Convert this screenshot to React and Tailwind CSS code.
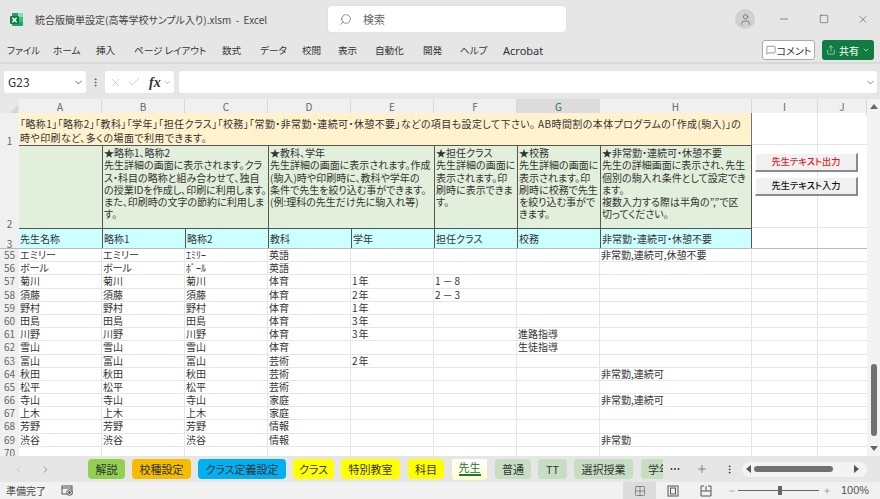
import React from "react";
import { Search, User, Minus, Square, X, ChevronDown, Check, MessageSquare, Share, ChevronLeft, ChevronRight, Plus, MoreVertical, MoreHorizontal, Grid2x2 } from "lucide-react";

const font = "[font-family:'Noto_Sans_CJK_JP','Noto_Sans',sans-serif] [font-feature-settings:'palt']";
const cols = "grid grid-cols-[19px_83px_83px_83px_83px_83px_83px_83px_152px_66px_49px]";

const menu = [
  ["ファイル", "w-[46px]"], ["ホーム", "w-[43px]"], ["挿入", "w-[38px]"], ["ページ レイアウト", "w-[88px]"],
  ["数式", "w-[38px]"], ["データ", "w-[42px]"], ["校閲", "w-[36px]"], ["表示", "w-[37px]"],
  ["自動化", "w-[48px]"], ["開発", "w-[37px]"], ["ヘルプ", "w-[43px]"],
];
const letters = ["A", "B", "C", "D", "E", "F", "G", "H", "I", "J"];

const rows = [
  [55, "エミリー", "エミリー", "ｴﾐﾘｰ", "英語", "", "", "", "非常勤,連続可,休憩不要"],
  [56, "ボール", "ボール", "ﾎﾞｰﾙ", "英語", "", "", "", ""],
  [57, "菊川", "菊川", "菊川", "体育", "1年", "1－8", "", ""],
  [58, "須藤", "須藤", "須藤", "体育", "2年", "2－3", "", ""],
  [59, "野村", "野村", "野村", "体育", "1年", "", "", ""],
  [60, "田島", "田島", "田島", "体育", "3年", "", "", ""],
  [61, "川野", "川野", "川野", "体育", "3年", "", "進路指導", ""],
  [62, "雪山", "雪山", "雪山", "体育", "", "", "生徒指導", ""],
  [63, "富山", "富山", "富山", "芸術", "2年", "", "", ""],
  [64, "秋田", "秋田", "秋田", "芸術", "", "", "", "非常勤,連続可"],
  [65, "松平", "松平", "松平", "芸術", "", "", "", ""],
  [66, "寺山", "寺山", "寺山", "家庭", "", "", "", "非常勤,連続可"],
  [67, "上木", "上木", "上木", "家庭", "", "", "", ""],
  [68, "芳野", "芳野", "芳野", "情報", "", "", "", ""],
  [69, "渋谷", "渋谷", "渋谷", "情報", "", "", "", "非常勤"],
  [70, "", "", "", "", "", "", "", ""],
];

const tabs = [
  ["解説", "bg-[#92d050] w-[37px]"],
  ["校種設定", "bg-[#f6bc00] w-[59px]"],
  ["クラス定義設定", "bg-[#00b0f0] w-[88px]"],
  ["クラス", "bg-[#ffff00] w-[41px]"],
  ["特別教室", "bg-[#ffff00] w-[59px]"],
  ["科目", "bg-[#ffff00] w-[36px] ml-[1px]"],
];
const tabs2 = [
  ["普通", "w-[36px] ml-[1px] justify-center"],
  ["TT", "w-[29px] justify-center"],
  ["選択授業", "w-[59px] justify-center"],
  ["学年", "w-[40px] ml-[1px] justify-start pl-[7px]"],
];

function Lines({ items }) {
  return items.map((t, i) => <div key={i} className="whitespace-nowrap">{t}</div>);
}

function Note({ span, items }) {
  return (
    <div className={`${span} bg-[#e2efda] border-l border-l-[#555] border-t border-t-[#555] pl-[1px] pt-[1px] text-[10px] leading-[12.3px] text-[#333]`}>
      <Lines items={items} />
    </div>
  );
}

function ExcelLogo() {
  return (
    <svg width="15" height="15" viewBox="0 0 15 15">
      <rect x="3" y="1" width="11" height="13" rx="1" fill="#21a366" />
      <rect x="9" y="1" width="5" height="4" fill="#8fdcb2" />
      <rect x="9" y="5" width="5" height="5" fill="#33c481" />
      <rect x="1" y="4" width="9" height="8" rx="1" fill="#107c41" />
      <path d="M3.4 5.7 L7.6 10.3 M7.6 5.7 L3.4 10.3" stroke="#fff" strokeWidth="1.3" />
    </svg>
  );
}

function Btn({ red, children }) {
  return (
    <div className={`w-[103px] h-[19px] bg-[#f0f0f0] border-r-2 border-b-2 border-r-[#8a8a8a] border-b-[#8a8a8a] border-t border-l border-t-white border-l-white flex items-center justify-center text-[9.2px] font-medium ${red ? "text-[#e01b24]" : "text-[#111]"}`}>
      {children}
    </div>
  );
}

export default function App() {
  return (
    <div className={`${font} w-[880px] h-[499px] overflow-hidden bg-[#e6e6e6] flex flex-col text-[#333]`}>
      {/* title bar */}
      <div className="h-[38px] flex items-center shrink-0">
        <div className="w-[35px] pl-[9px] flex items-center"><ExcelLogo /></div>
        <div className="w-[293px] text-[10px] text-[#444] whitespace-pre">統合版簡単設定(高等学校サンプル入り).xlsm  -  Excel</div>
        <div className="w-[238px] h-[26px] bg-white rounded-[3px] shadow-[0_0_1px_#bbb] flex items-center pl-[11px] gap-[11px] text-[11px] text-[#666]">
          <Search size={13} className="-scale-x-100" strokeWidth={1.3} />
          <span>検索</span>
        </div>
        <div className="ml-[169px] w-[20px] h-[20px] rounded-full bg-[#d0d0d0] flex items-center justify-center"><User size={13} strokeWidth={1.2} className="text-[#555]" /></div>
        <div className="ml-[23px] w-[12px] flex justify-center"><Minus size={12} strokeWidth={1} className="text-[#222]" /></div>
        <div className="ml-[28px] w-[12px] flex justify-center"><Square size={10} strokeWidth={1.1} className="text-[#222]" /></div>
        <div className="ml-[27px] w-[12px] flex justify-center"><X size={13} strokeWidth={1} className="text-[#222]" /></div>
      </div>
      {/* ribbon tabs */}
      <div className="h-[26px] shrink-0 flex items-center pl-[7px] border-b-2 border-b-[#d8d8d8]">
        <div className="w-[755px] flex text-[9.6px] leading-[15px] text-[#333] whitespace-nowrap">
          {menu.map(([m, w]) => <span key={m} className={w}>{m}</span>)}
          <span className="text-[11px] [font-family:'Noto_Sans',sans-serif]">Acrobat</span>
        </div>
        <div className="w-[53px] h-[20px] bg-white border border-[#aaa] rounded-[3px] flex items-center justify-center gap-[1px] text-[10px] text-[#333]">
          <MessageSquare size={10} strokeWidth={1.2} />コメント
        </div>
        <div className="ml-[7px] w-[52px] h-[20px] bg-[#107c41] rounded-[3px] flex items-center justify-center gap-[3px] text-[10px] text-white">
          <Share size={10} strokeWidth={1.3} />共有<ChevronDown size={8} strokeWidth={2} />
        </div>
      </div>
      {/* formula bar */}
      <div className="h-[35px] shrink-0 flex items-center pl-[4px] pt-[1px] gap-[5px]">
        <div className="w-[82px] h-[22px] bg-white rounded-[3px] flex items-center justify-between pl-[4px] pr-[2px] text-[12px]">
          G23<ChevronDown size={11} strokeWidth={1.6} />
        </div>
        <MoreVertical size={11} strokeWidth={2} className="-mx-[1px] text-[#555]" />
        <div className="w-[69px] h-[22px] bg-white rounded-[3px] flex items-center pl-[4px] text-[#aaa]">
          <X size={13} strokeWidth={1} />
          <Check size={14} strokeWidth={1} className="ml-[5px]" />
          <span className="ml-[8px] text-[14px] font-bold italic text-[#333] [font-family:'Liberation_Serif',serif]">fx</span>
          <ChevronDown size={9} strokeWidth={1.2} className="ml-[2px] text-[#666]" />
        </div>
        <div className="w-[698px] h-[22px] bg-white rounded-[3px] flex items-center justify-end pr-[1px]">
          <ChevronDown size={11} strokeWidth={1.4} className="text-[#444]" />
        </div>
      </div>
      {/* sheet */}
      <div className="h-[357px] shrink-0 flex bg-white overflow-hidden">
        <div className="relative w-[867px] overflow-hidden text-[10px] text-[#333]">
          {/* column headings */}
          <div className={`${cols} h-[14px] bg-[#f0f0f0] text-[#666] leading-[15px] text-center`}>
            <div className="bg-[#e8e8e8] flex justify-end items-end pr-[1px] pb-[1px]">
              <div className="w-0 h-0 border-l-[10px] border-l-transparent border-b-[10px] border-b-[#d6d6d6]" />
            </div>
            {letters.map((l) => (
              <div key={l} className={l === "G" ? "bg-[#dcdcdc] border-b-2 border-b-[#217346] text-[#217346]" : "border-r border-r-[#d8d8d8]"}>{l}</div>
            ))}
          </div>
          {/* rows 1-3 */}
          <div className={`${cols} grid-rows-[32px_83px_20px]`}>
            <div className="bg-[#f0f0f0] text-[#666] flex items-end justify-center row-span-1 leading-[9px]">1</div>
            <div className="col-span-8 bg-[#fff2cc] border-r border-r-[#777] pl-[1px] pt-[4px] leading-[13.5px] text-[#333] tracking-[0.4px]">
              <Lines items={["「略称1」「略称2」「教科」「学年」「担任クラス」「校務」「常勤・非常勤・連続可・休憩不要」などの項目も設定して下さい。 AB時間割の本体プログラムの「作成(駒入)」の", "時や印刷など、多くの場面で利用できます。"]} />
            </div>
            <div className="border-b border-b-[#e4e4e4] border-r border-r-[#e4e4e4]" />
            <div className="border-b border-b-[#e4e4e4]" />

            <div className="bg-[#f0f0f0] text-[#666] flex items-end justify-center leading-[9px]">2</div>
            <div className="bg-[#e2efda] border-t border-t-[#555]" />
            <Note span="col-span-2" items={["★略称1、略称2", "先生詳細の画面に表示されます。クラ", "ス・科目の略称と組み合わせて、独自", "の授業IDを作成し、印刷に利用します。", "また、印刷時の文字の節約に利用しま", "す。"]} />
            <Note span="col-span-2" items={["★教科、学年", "先生詳細の画面に表示されます。作成", "(駒入)時や印刷時に、教科や学年の", "条件で先生を絞り込む事ができます。", "(例:理科の先生だけ先に駒入れ等)"]} />
            <Note span="" items={["★担任クラス", "先生詳細の画面に", "表示されます。印", "刷時に表示できま", "す。"]} />
            <Note span="" items={["★校務", "先生詳細の画面に", "表示されます。印", "刷時に校務で先生", "を絞り込む事がで", "きます。"]} />
            <Note span="border-r border-r-[#555]" items={["★非常勤・連続可・休憩不要", "先生の詳細画面に表示され、先生", "個別の駒入れ条件として設定でき", "ます。", "複数入力する際は半角の”,”で区", "切ってください。"]} />
            <div className="border-b border-b-[#e4e4e4] border-r border-r-[#e4e4e4]" />
            <div className="border-b border-b-[#e4e4e4]" />

            <div className="bg-[#f0f0f0] text-[#666] flex items-end justify-center leading-[9px]">3</div>
            {["先生名称", "略称1", "略称2", "教科", "学年", "担任クラス", "校務", "非常勤・連続可・休憩不要"].map((t, i) => (
              <div key={t} className={`bg-[#ccffff] border-t border-t-[#555] pl-[1px] flex items-center text-[#333] whitespace-nowrap ${i > 0 ? "border-l border-l-[#555]" : ""} ${i === 7 ? "border-r border-r-[#555]" : ""}`}>{t}</div>
            ))}
            <div className="border-r border-r-[#e4e4e4]" />
            <div />
          </div>
          <div className="h-[1px] bg-[#bbb]" />
          {/* data rows */}
          {rows.map((r) => (
            <div key={r[0]} className={`${cols} h-[13.2px] leading-[12px]`}>
              <div className="bg-[#f0f0f0] text-[#666] text-center">{r[0]}</div>
              {r.slice(1).map((c, i) => (
                <div key={i} className={`border-r border-b border-[#e6e6e6] pl-[1px] text-[#333] whitespace-nowrap ${i === 4 ? "tracking-[1px]" : ""} ${i === 5 ? "tracking-[2px]" : ""}`}>{c}</div>
              ))}
              <div className="border-r border-b border-[#e6e6e6]" />
              <div className="border-b border-[#e6e6e6]" />
            </div>
          ))}
          {/* floating sheet buttons */}
          <div className="absolute left-[755px] top-[54px] flex flex-col gap-[5px]">
            <Btn red>先生テキスト出力</Btn>
            <Btn>先生テキスト入力</Btn>
          </div>
        </div>
        {/* vertical scrollbar */}
        <div className="w-[13px] bg-[#f3f3f3] flex flex-col items-center pl-[1px]">
          <div className="mt-[5px] w-0 h-0 border-l-[4px] border-r-[4px] border-b-[5px] border-l-transparent border-r-transparent border-b-[#666]" />
          <div className="mt-[255px] w-[6px] h-[72px] rounded-full bg-[#6f736e]" />
          <div className="mt-[10px] w-0 h-0 border-l-[4px] border-r-[4px] border-t-[5px] border-l-transparent border-r-transparent border-t-[#666]" />
        </div>
      </div>
      {/* sheet tabs */}
      <div className="h-[26px] shrink-0 flex items-center text-[11px] text-[#333]">
        <div className="w-[88px] flex items-center pl-[13px] gap-[16px] text-[#666]">
          <ChevronLeft size={11} strokeWidth={1.2} className="text-[#aaa]" />
          <ChevronRight size={11} strokeWidth={1.4} />
        </div>
        <div className="w-[575px] flex items-center gap-[7px] overflow-hidden whitespace-nowrap">
          {tabs.map(([t, c]) => (
            <div key={t} className={`${c} h-[20px] shrink-0 rounded-[4px] flex items-center justify-center`}>{t}</div>
          ))}
          <div className="w-[35px] h-[23px] shrink-0 ml-[1px] mt-[-2px] rounded-[4px] bg-gradient-to-b from-white to-[#ffffcc] flex items-center justify-center">
            <span className="border-b-2 border-b-[#217346] leading-[13px] text-[#217346]">先生</span>
          </div>
          {tabs2.map(([t, c]) => (
            <div key={t} className={`${c} h-[20px] shrink-0 rounded-[4px] bg-[#c6dfc2] flex items-center`}>{t}</div>
          ))}
        </div>
        <MoreHorizontal size={12} strokeWidth={2.4} className="ml-[6px] text-[#444]" />
        <Plus size={12} strokeWidth={1.2} className="ml-[15px] text-[#444]" />
        <MoreVertical size={11} strokeWidth={2} className="ml-[16px] text-[#444]" />
        <div className="ml-[7px] w-[125px] h-[15px] bg-[#f3f3f3] rounded-full flex items-center px-[4px]">
          <div className="w-0 h-0 border-t-[4px] border-b-[4px] border-r-[5px] border-t-transparent border-b-transparent border-r-[#555]" />
          <div className="ml-[3px] w-[79px] h-[6px] rounded-full bg-[#6f736e]" />
          <div className="ml-[21px] w-0 h-0 border-t-[4px] border-b-[4px] border-l-[5px] border-t-transparent border-b-transparent border-l-[#555]" />
        </div>
      </div>
      {/* status bar */}
      <div className="h-[17px] shrink-0 bg-[#f1f1f1] flex items-center pl-[6px] text-[10px] text-[#444]">
        <span className="w-[55px]">準備完了</span>
        <svg width="13" height="13" viewBox="0 0 13 13" fill="none" stroke="#555">
          <rect x="1" y="2" width="10" height="8" />
          <path d="M1 4 H11" />
          <circle cx="8.5" cy="8.5" r="2.8" fill="#f1f1f1" />
          <circle cx="8.5" cy="8.5" r="1" fill="#555" />
        </svg>
        <div className="ml-[549px] w-[33px] h-[17px] bg-[#dcdcdc] flex items-center justify-center"><Grid2x2 size={12} strokeWidth={1.1} /></div>
        <div className="w-[33px] flex justify-center">
          <svg width="12" height="12" viewBox="0 0 12 12" fill="none" stroke="#555"><rect x="1" y="1" width="10" height="10" /><rect x="3.5" y="3" width="5" height="6" /></svg>
        </div>
        <div className="w-[33px] flex justify-center">
          <svg width="12" height="12" viewBox="0 0 12 12" fill="none" stroke="#555"><path d="M1 1 V11 H11 V1 M1 6 H11 M6 1 V6 M1 1 H4 M8 1 H11" /></svg>
        </div>
        <Minus size={8} strokeWidth={1.2} className="ml-[6px]" />
        <div className="ml-[2px] w-[81px] h-[1px] bg-[#666] flex items-center pl-[40px]">
          <div className="w-[4px] h-[9px] bg-[#666]" />
        </div>
        <Plus size={8} strokeWidth={1.2} className="ml-[4px]" />
        <span className="ml-[10px] text-[11px] text-[#555] [font-family:'Liberation_Sans',sans-serif]">100%</span>
      </div>
    </div>
  );
}
